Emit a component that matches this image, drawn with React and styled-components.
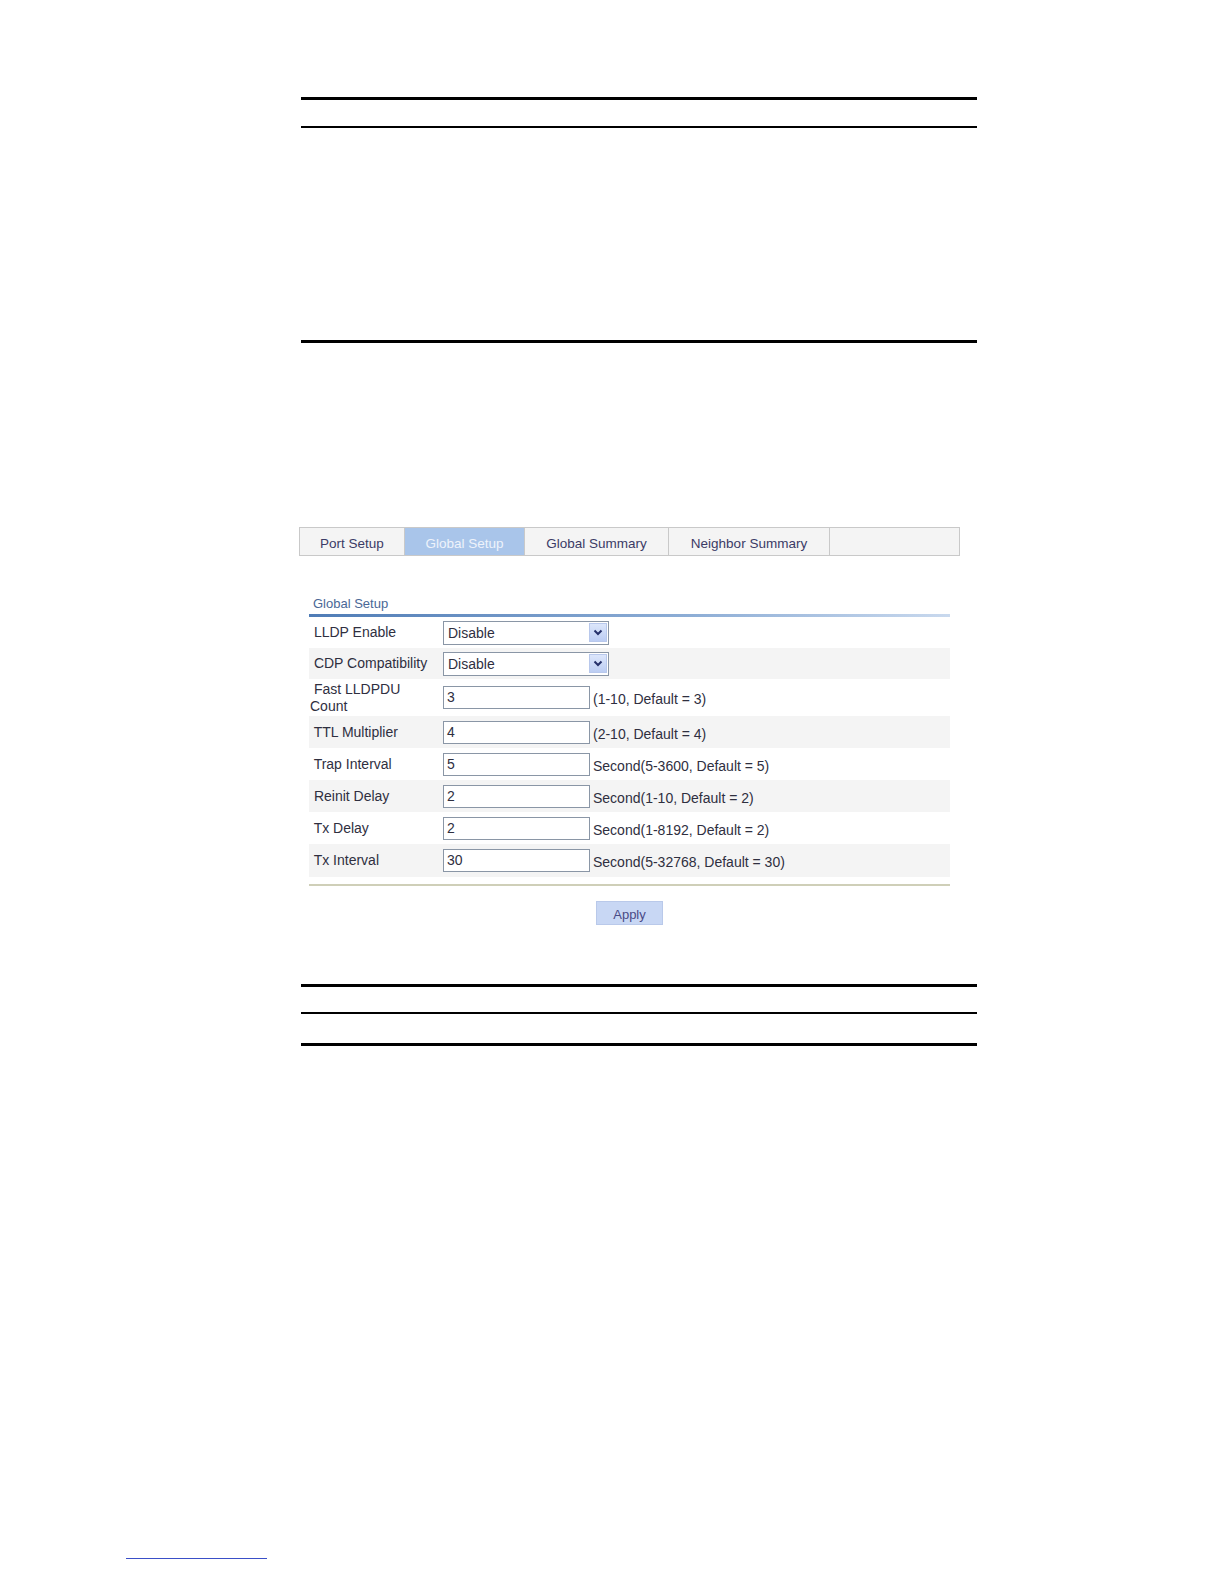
import React from "react";
import styled, { createGlobalStyle } from "styled-components";

const GlobalStyle = createGlobalStyle`
  html, body {
    margin: 0;
    padding: 0;
    background: #ffffff;
  }
  body {
    font-family: "Liberation Sans", Arial, sans-serif;
    color: #2f2f3f;
  }
`;

const Page = styled.div`
  width: 1224px;
  min-height: 1584px;
  position: relative;
  box-sizing: border-box;
  padding-top: 97px;
`;

const Column = styled.div`
  margin-left: 301px;
  width: 676px;
  display: flex;
  flex-direction: column;
`;

const Rule = styled.div`
  height: ${p => p.$thick || 3}px;
  background: #000;
  margin-top: ${p => p.$top || 0}px;
`;

/* Screenshot area */
const Shot = styled.div`
  margin-top: 184px;
  margin-left: -2px;
  width: 661px;
  display: flex;
  flex-direction: column;
`;

const Tabs = styled.div`
  display: flex;
  height: 29px;
  border: 1px solid #c9c9c9;
  border-right: 1px solid #c9c9c9;
  background: #f4f4f4;
  box-sizing: border-box;
`;

const Tab = styled.div`
  width: ${p => p.$w}px;
  flex: ${p => (p.$fill ? "1 1 auto" : "0 0 auto")};
  display: flex;
  align-items: center;
  justify-content: center;
  padding-top: 3px;
  box-sizing: border-box;
  font-size: 13.5px;
  color: ${p => (p.$active ? "#eef3fb" : "#3b3b66")};
  background: ${p => (p.$active ? "#a9c5ea" : "#f4f4f4")};
  border-right: ${p => (p.$fill ? "none" : "1px solid #c9c9c9")};
`;

const Panel = styled.div`
  margin-left: 10px;
  width: 641px;
  display: flex;
  flex-direction: column;
`;

const PanelTitle = styled.div`
  margin-top: 40px;
  padding-left: 4px;
  font-size: 13px;
  color: #4a6896;
  line-height: 16px;
`;

const TitleLine = styled.div`
  margin-top: 2px;
  height: 3px;
  background: linear-gradient(to right, #4f7cb6 0%, #8eaed6 60%, #c9d9ee 100%);
`;

const Row = styled.div`
  display: grid;
  grid-template-columns: 134px auto;
  align-items: center;
  height: ${p => p.$h || 32}px;
  background: ${p => (p.$alt ? "#f4f4f4" : "#ffffff")};
`;

const Label = styled.div`
  padding-left: 1px;
  font-size: 14px;
  line-height: 17px;
  color: #2f2f3f;
  white-space: pre;
`;

const Field = styled.div`
  display: flex;
  align-items: center;
`;

const TextBox = styled.div`
  width: 147px;
  height: 23px;
  box-sizing: border-box;
  border: 1px solid #8a96a6;
  background: #fff;
  font-size: 14px;
  line-height: 21px;
  padding-left: 3px;
  color: #2f2f3f;
`;

const Hint = styled.span`
  margin-left: 3px;
  padding-top: 3px;
  font-size: 14px;
  color: #2f2f3f;
`;

const SelectBox = styled.div`
  width: 166px;
  height: 24px;
  box-sizing: border-box;
  border: 1px solid #8a96a6;
  background: #fff;
  display: flex;
  align-items: center;
  justify-content: space-between;
  padding-left: 4px;
  padding-right: 1px;
  font-size: 14px;
  color: #2f2f3f;
`;

const Arrow = styled.div`
  width: 18px;
  height: 19px;
  box-sizing: border-box;
  border: 1px solid #b8c8ec;
  background: linear-gradient(to bottom, #dce6fb, #bccdf3);
  display: flex;
  align-items: center;
  justify-content: center;
`;

const BottomLine = styled.div`
  margin-top: 7px;
  height: 2px;
  background: #cfcfb8;
`;

const ButtonRow = styled.div`
  display: flex;
  justify-content: center;
  margin-top: 15px;
  padding-left: 0px;
`;

const ApplyButton = styled.div`
  width: 67px;
  height: 24px;
  box-sizing: border-box;
  border: 1px solid #b9c9ea;
  background: #c8d7f4;
  display: flex;
  align-items: center;
  justify-content: center;
  padding-top: 2px;
  font-size: 13px;
  color: #4a4a86;
`;

const FootLink = styled.div`
  position: absolute;
  left: 126px;
  top: 1558px;
  width: 141px;
  height: 1px;
  background: #3a4fc8;
`;

const Select = ({ value }) => (
  <SelectBox>
    <span>{value}</span>
    <Arrow>
      <svg width="10" height="7" viewBox="0 0 10 7">
        <path d="M1.5 1.5 L5 5 L8.5 1.5" fill="none" stroke="#25306a" strokeWidth="2" />
      </svg>
    </Arrow>
  </SelectBox>
);

const Input = ({ value, hint }) => (
  <Field>
    <TextBox>{value}</TextBox>
    <Hint>{hint}</Hint>
  </Field>
);

const rows = [
  { label: "TTL Multiplier", value: "4", hint: "(2-10, Default = 4)" },
  { label: "Trap Interval", value: "5", hint: "Second(5-3600, Default = 5)" },
  { label: "Reinit Delay", value: "2", hint: "Second(1-10, Default = 2)" },
  { label: "Tx Delay", value: "2", hint: "Second(1-8192, Default = 2)" },
  { label: "Tx Interval", value: "30", hint: "Second(5-32768, Default = 30)" },
];

export default function App() {
  return (
    <Page>
      <GlobalStyle />
      <Column>
        <Rule $thick={3} />
        <Rule $thick={2} $top={26} />
        <Rule $thick={3} $top={212} />

        <Shot>
          <Tabs>
            <Tab $w={105}>Port Setup</Tab>
            <Tab $w={120} $active>Global Setup</Tab>
            <Tab $w={144}>Global Summary</Tab>
            <Tab $w={161}>Neighbor Summary</Tab>
            <Tab $fill />
          </Tabs>

          <Panel>
            <PanelTitle>Global Setup</PanelTitle>
            <TitleLine />
            <Row $h={31}>
              <Label>{" LLDP Enable"}</Label>
              <Field><Select value="Disable" /></Field>
            </Row>
            <Row $h={31} $alt>
              <Label>{" CDP Compatibility"}</Label>
              <Field><Select value="Disable" /></Field>
            </Row>
            <Row $h={37}>
              <Label>{" Fast LLDPDU\nCount"}</Label>
              <Input value="3" hint="(1-10, Default = 3)" />
            </Row>
            {rows.map((r, i) => (
              <Row key={r.label} $alt={i % 2 === 0} $h={i === 4 ? 33 : 32}>
                <Label>{" " + r.label}</Label>
                <Input value={r.value} hint={r.hint} />
              </Row>
            ))}
            <BottomLine />
            <ButtonRow>
              <ApplyButton>Apply</ApplyButton>
            </ButtonRow>
          </Panel>
        </Shot>

        <Rule $thick={3} $top={59} />
        <Rule $thick={2} $top={25} />
        <Rule $thick={3} $top={29} />
      </Column>
      <FootLink />
    </Page>
  );
}
